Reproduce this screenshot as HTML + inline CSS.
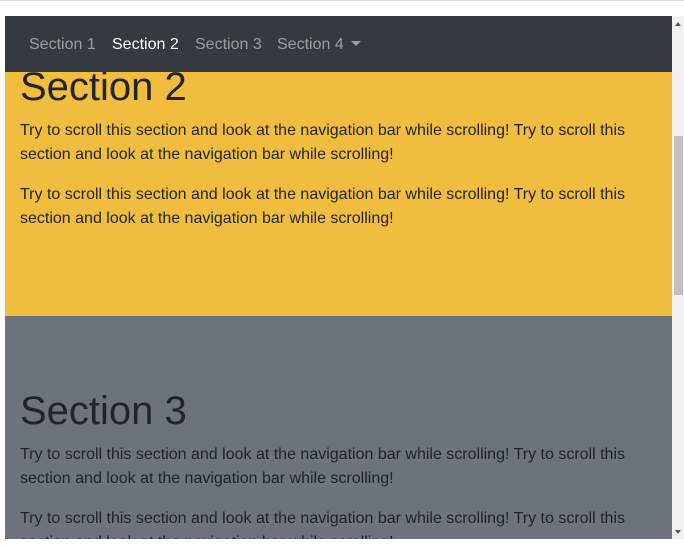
<!DOCTYPE html>
<html><head><style>
*{box-sizing:border-box;margin:0;padding:0}
html,body{width:684px;height:547px;overflow:hidden}
body{background:#fff;font-family:"Liberation Sans",sans-serif;color:#212529;position:relative}
.topline{position:absolute;left:0;top:0;width:684px;height:1px;background:#dcdcdc}
.frame{position:absolute;left:5px;top:16px;width:667px;height:523px;overflow:hidden}
.nav{position:absolute;left:0;top:0;width:667px;height:56px;background:#343a40;z-index:2;padding-left:16px}
.nav a{position:absolute;top:19px;font-size:16px;line-height:20px;color:rgba(255,255,255,.5);text-decoration:none;white-space:nowrap}
.nav a.act{color:#fff}
.caret{display:inline-block;margin-left:7px;vertical-align:3px;border-top:5px solid rgba(255,255,255,.5);border-left:5px solid transparent;border-right:5px solid transparent}
.sec{position:absolute;left:0;width:667px;padding:0 15px;overflow:hidden}
h1{font-size:40px;font-weight:500;line-height:48px;margin-bottom:8px}
p{font-size:16px;line-height:24px;margin-bottom:16px}
.sb{position:absolute;left:672px;top:16px;width:12px;height:523px;background:#f1f1f1}
.thumb{position:absolute;left:674px;top:136px;width:9px;height:159px;background:#c1c1c1}
</style></head><body>
<div class="topline"></div>
<div class="frame">
<div class="nav">
<a style="left:24px">Section 1</a>
<a class="act" style="left:107px">Section 2</a>
<a style="left:190px">Section 3</a>
<a style="left:272px">Section 4<span class="caret"></span></a>
</div>
<div class="sec" style="top:56px;height:244px;background:#f0bd3e"></div>
<div class="sec" style="top:47px;height:200px">
<h1>Section 2</h1>
<p>Try to scroll this section and look at the navigation bar while scrolling! Try to scroll this section and look at the navigation bar while scrolling!</p>
<p>Try to scroll this section and look at the navigation bar while scrolling! Try to scroll this section and look at the navigation bar while scrolling!</p>
</div>
<div class="sec" style="top:300px;height:223px;background:#6c737c;padding-top:71px">
<h1>Section 3</h1>
<p>Try to scroll this section and look at the navigation bar while scrolling! Try to scroll this section and look at the navigation bar while scrolling!</p>
<p>Try to scroll this section and look at the navigation bar while scrolling! Try to scroll this section and look at the navigation bar while scrolling!</p>
</div>
</div>
<div class="sb"></div>
<div class="thumb"></div>
<div style="position:absolute;left:675px;top:22px;border-bottom:4px solid #555;border-left:3.5px solid transparent;border-right:3.5px solid transparent"></div>
<div style="position:absolute;left:675px;top:530px;border-top:4px solid #555;border-left:3.5px solid transparent;border-right:3.5px solid transparent"></div>
</body></html>
